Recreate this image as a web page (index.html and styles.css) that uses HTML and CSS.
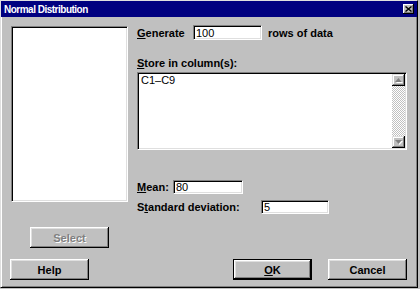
FILE: index.html
```html
<!DOCTYPE html>
<html lang="en">
<head>
    <meta charset="UTF-8">
    <title>Normal Distribution</title>
    <link rel="stylesheet" href="styles.css">
</head>
<body>

<div class="dialog">

    <div class="titlebar">
        <span class="title">Normal Distribution</span>
        <span class="close">
            <svg width="7" height="6" viewBox="0 0 7 6"><path d="M0.5 0.5L6.5 5.5M6.5 0.5L0.5 5.5" stroke="#000" stroke-width="1.4" fill="none"/></svg>
        </span>
    </div>

    <div class="content">

        <div class="left">
            <div class="listbox sunken"></div>
            <button class="btn btn-select" disabled>Select</button>
        </div>

        <div class="right">
            <div class="row">
                <label class="lbl lbl-gen"><u>G</u>enerate</label>
                <input class="field sunken field-gen" value="100">
                <span class="lbl">rows of data</span>
            </div>

            <label class="lbl lbl-store"><u>S</u>tore in column(s):</label>

            <div class="textarea sunken">
                <div class="textarea-text">C1–C9</div>
                <div class="scrollbar">
                    <span class="sb-btn">
                        <svg width="7" height="4" viewBox="0 0 7 4"><polygon points="0,4 3.5,0 7,4" fill="#808080"/></svg>
                    </span>
                    <span class="track"></span>
                    <span class="sb-btn">
                        <svg width="7" height="4" viewBox="0 0 7 4"><polygon points="0,0 7,0 3.5,4" fill="#808080"/></svg>
                    </span>
                </div>
            </div>

            <div class="row row-mean">
                <label class="lbl lbl-mean"><u>M</u>ean:</label>
                <input class="field sunken field-mean" value="80">
            </div>

            <div class="row row-sd">
                <label class="lbl lbl-sd">S<u>t</u>andard deviation:</label>
                <input class="field sunken field-sd" value="5">
            </div>
        </div>

    </div>

    <div class="buttons">
        <button class="btn">Help</button>
        <button class="btn btn-default"><u>O</u>K</button>
        <button class="btn btn-cancel">Cancel</button>
    </div>

</div>

</body>
</html>
```

FILE: styles.css
```css
body{
    margin: 0;
    background-color: #c0c0c0;
    font: bold 11px "Liberation Sans", Arial, sans-serif;
    color: #000000;
}

u{
    text-decoration: underline;
    text-underline-offset: 1px;
}

/* vinduet */
.dialog{
    width: 418px;
    height: 288px;
    box-sizing: border-box;
    border: 1px solid;
    border-color: #dfdfdf #000000 #000000 #dfdfdf;
    box-shadow: inset 1px 1px #ffffff, inset -1px -1px #808080;
    display: flex;
    flex-direction: column;
}

.titlebar{
    height: 16px;
    background-color: #000080;
    color: #ffffff;
    display: flex;
    align-items: center;
    justify-content: space-between;
    padding: 0 3px 0 3px;
}

.title{
    font: bold 10px "Liberation Sans Narrow", "Liberation Sans", sans-serif;
    letter-spacing: -0.5px;
    padding-top: 1px;
}

.close{
    width: 11px;
    height: 10px;
    box-sizing: border-box;
    background-color: #c0c0c0;
    box-shadow: inset -1px -1px #000000, inset 1px 1px #ffffff, inset -2px -2px #808080;
    display: flex;
    align-items: center;
    justify-content: center;
    padding-bottom: 1px;
}

/* innhold */
.content{
    display: grid;
    grid-template-columns: 117px 1fr;
    column-gap: 9px;
    padding: 8px 0 0 10px;
}

.left{
    padding-top: 1px;
    display: flex;
    flex-direction: column;
    align-items: center;
}

.sunken{
    box-sizing: border-box;
    border: 1px solid;
    border-color: #808080 #ffffff #ffffff #808080;
    box-shadow: inset 1px 1px #000000, inset -1px -1px #dfdfdf;
    background-color: #ffffff;
}

.listbox{
    width: 117px;
    height: 176px;
}

.row{
    display: flex;
    align-items: center;
}

.lbl-gen{
    width: 56px;
}

.field{
    font: 11px "Liberation Sans", Arial, sans-serif;
    padding: 0 2px;
    margin: 0;
    outline: none;
    color: #000000;
}

.field-gen{
    width: 69px;
    height: 15px;
    margin-right: 6px;
}

.lbl-store{
    display: block;
    margin-top: 17px;
    line-height: 13px;
}

.textarea{
    width: 270px;
    height: 78px;
    margin-top: 2px;
    padding: 1px;
    display: flex;
}

.textarea-text{
    flex: 1;
    font: 11px "Liberation Sans", Arial, sans-serif;
    line-height: 13px;
    padding: 0 2px;
}

.scrollbar{
    width: 13px;
    display: flex;
    flex-direction: column;
}

.sb-btn{
    height: 12px;
    background-color: #c0c0c0;
    box-shadow: inset -1px -1px #000000, inset 1px 1px #dfdfdf, inset -2px -2px #808080, inset 2px 2px #ffffff;
    display: flex;
    align-items: center;
    justify-content: center;
}

.sb-btn svg{
    filter: drop-shadow(1px 1px 0 #ffffff);
}

.track{
    flex: 1;
    background-image: repeating-conic-gradient(#ffffff 0 25%, #c0c0c0 0 50%);
    background-size: 2px 2px;
}

.row-mean{
    margin-top: 30px;
}

.lbl-mean{
    width: 36px;
}

.field-mean{
    width: 70px;
    height: 14px;
}

.row-sd{
    margin-top: 6px;
}

.lbl-sd{
    width: 124px;
}

.field-sd{
    width: 68px;
    height: 14px;
}

/* knapper */
.btn{
    width: 79px;
    height: 21px;
    box-sizing: border-box;
    border: none;
    padding: 0;
    background-color: #c0c0c0;
    box-shadow: inset -1px -1px #000000, inset 1px 1px #ffffff, inset -2px -2px #808080, inset 2px 2px #dfdfdf;
    font: inherit;
    color: #000000;
}

.btn-select{
    margin-top: 25px;
}

.btn:disabled{
    color: #808080;
    text-shadow: 1px 1px #ffffff;
}

.btn-default{
    border: 1px solid #000000;
    margin-left: auto;
}

.btn-cancel{
    margin-left: 16px;
}

.buttons{
    display: flex;
    margin-top: 11px;
    padding: 0 10px 0 9px;
}
```
